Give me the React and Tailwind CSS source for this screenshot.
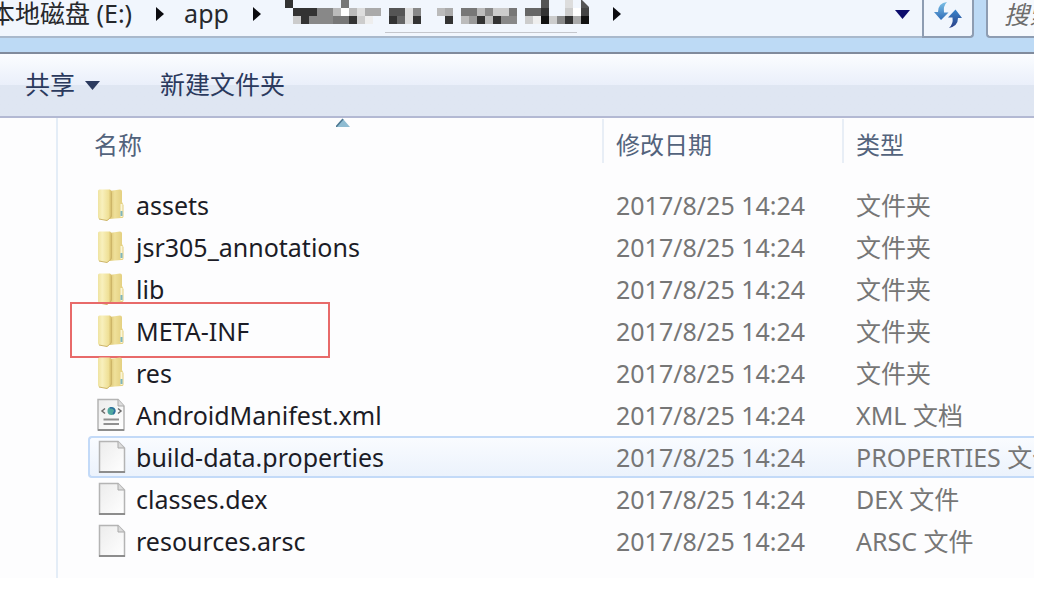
import { useState } from "react";

const files = [
  { name: "assets", kind: "folder", type: "文件夹" },
  { name: "jsr305_annotations", kind: "folder", type: "文件夹" },
  { name: "lib", kind: "folder", type: "文件夹" },
  { name: "META-INF", kind: "folder", type: "文件夹", marked: true },
  { name: "res", kind: "folder", type: "文件夹" },
  { name: "AndroidManifest.xml", kind: "xml", type: "XML 文档" },
  { name: "build-data.properties", kind: "file", type: "PROPERTIES 文件" },
  { name: "classes.dex", kind: "file", type: "DEX 文件" },
  { name: "resources.arsc", kind: "file", type: "ARSC 文件" },
];

// gray level of every 8px block, "." is empty
const mosaic = [
  "3......7........................5..d.5",
  ".33388bfbdaa.55d8..ba.77b8cc7.663..cf4",
  ".c3888773ce..36d3...3.b93b388.ce1c83a1",
];

const FolderIcon = () => (
  <svg className="overflow-visible" width="28" height="34" viewBox="1 0 28 34" aria-hidden="true">
    <defs>
      <linearGradient id="folderFront" x1="0" x2="1">
        <stop offset="0" stopColor="#efe3a0" />
        <stop offset="0.3" stopColor="#f8f0bd" />
        <stop offset="0.75" stopColor="#efe096" />
        <stop offset="1" stopColor="#cdb15c" />
      </linearGradient>
      <linearGradient id="folderBack" x1="0" x2="1">
        <stop offset="0" stopColor="#d8c06c" />
        <stop offset="0.4" stopColor="#efe09a" />
        <stop offset="1" stopColor="#e2cd7c" />
      </linearGradient>
    </defs>
    <path d="M12 3 23 1.5Q25 1.5 25 3.500V14L26.500 17V28.500Q26.500 30 24.500 30L12 31Z" fill="url(#folderBack)" />
    <path d="M1 3Q1 1.500 2.500 1.500H13Q15 2.500 15 5V27Q15 29 13 30.500L10 32.500 2 31Q1 30.500 1 29Z" fill="url(#folderFront)" />
    <path d="M14.500 5V27Q14.500 29 12.500 30.500L10 32.500 2 31" fill="none" stroke="#cdb568" strokeWidth="1" />
    <path d="M24.500 16V29" stroke="#faf5d6" strokeWidth="2" />
    <path d="M24.500 23V28" stroke="#7fb6bd" strokeWidth="2" />
  </svg>
);

const FileIcon = ({ xml }) => (
  <svg className="overflow-visible" width="28" height="34" viewBox="1 0 28 34" aria-hidden="true">
    <defs>
      <linearGradient id="paper" x1="0" y1="0" x2="1" y2="1">
        <stop offset="0" stopColor="#ececec" />
        <stop offset="1" stopColor="#ffffff" />
      </linearGradient>
    </defs>
    <path
      d={xml ? "M1 1.500H21L27 8V32H1Z" : "M2.500 1.500H21L27.500 8V32H2.500Z"}
      fill="url(#paper)"
      stroke="#b4b4b4"
      strokeWidth="1.500"
    />
    <path d={xml ? "M1 32H27" : "M2 32H28"} stroke="#8d8d8d" strokeWidth="2" />
    <path d="M21 1.500V8H27" fill="#dcdcdc" stroke="#a9a9a9" />
    {xml && (
      <>
        <circle cx="14.500" cy="13" r="4" fill="#4fa79f" />
        <path d="M13 10Q15 9 17 11T16 16" fill="none" stroke="#2d6aa0" strokeWidth="1.500" />
        <path d="M8 10.500 5 13 8 15.500M21 10.500 24 13 21 15.500" fill="none" stroke="#6a6a6a" strokeWidth="1.500" />
        <path d="M6.500 21.500H22M6.500 26H22" stroke="#8f8f8f" strokeWidth="2" />
      </>
    )}
  </svg>
);

const CrumbArrow = () => (
  <svg className="shrink-0" width="8" height="14" viewBox="0 0 8 14" aria-hidden="true">
    <path d="M0 0 8 7 0 14Z" fill="#0b0b0f" />
  </svg>
);

const DownArrow = ({ color }) => (
  <svg width="15" height="9" viewBox="0 0 15 9" aria-hidden="true">
    <path d="M0 0H15L7.500 9Z" fill={color} />
  </svg>
);

const RefreshIcon = () => (
  <svg width="28" height="30" viewBox="0 0 28 30" aria-hidden="true">
    <defs>
      <linearGradient id="arrowDown" x1="0" y1="0" x2="0" y2="1">
        <stop offset="0" stopColor="#7cc0e6" />
        <stop offset="1" stopColor="#2f6cb8" />
      </linearGradient>
      <linearGradient id="arrowUp" x1="0" y1="0" x2="0" y2="1">
        <stop offset="0" stopColor="#3a86cc" />
        <stop offset="1" stopColor="#2b3f86" />
      </linearGradient>
    </defs>
    <path d="M13 2Q4 3 4 12H0L7 20 14.500 12.500H10Q9 6 13 2Z" fill="url(#arrowDown)" />
    <path d="M15 28Q24 26 24 18H28L21.500 9.500 14 17.500H18.500Q19.500 24 15 28Z" fill="url(#arrowUp)" />
  </svg>
);

const Mosaic = () => (
  <svg className="shrink-0 self-start" width="304" height="34" viewBox="0 0 304 34" aria-hidden="true">
    {mosaic.map((row, y) =>
      row.split("").map((c, x) =>
        c === "." ? null : (
          <rect key={`${x}-${y}`} x={x * 8} y={y * 8} width="8" height="8" fill={`#${c}${c}${c}`} />
        )
      )
    )}
    <path d="M297 0H304V7Z" fill="#f1f6fd" />
    <path d="M100 32.500H292" stroke="#c4c6cc" strokeWidth="1" />
  </svg>
);

const App = () => {
  const [selected, setSelected] = useState("build-data.properties");

  return (
    <div className="overflow-hidden bg-white pr-2 font-['Noto_Sans','Noto_Sans_CJK_SC',sans-serif] text-[25px]">
      {/* address bar */}
      <div className="flex h-13 items-start overflow-hidden bg-[#bddaf5]">
        <nav className="flex h-[38px] min-w-0 flex-1 items-center border-b-2 border-[#a9b9cc] bg-[#f1f6fd] pb-2 text-[#26282c]">
          <a href="#disk" className="-ml-[10px] shrink-0">本地磁盘 (E:)</a>
          <span className="ml-6"><CrumbArrow /></span>
          <a href="#app" className="ml-5 shrink-0">app</a>
          <span className="ml-6"><CrumbArrow /></span>
          <span className="ml-6 self-start"><Mosaic /></span>
          <span className="ml-6"><CrumbArrow /></span>
          <button className="mr-3 ml-auto" aria-label="历史"><DownArrow color="#0c0c6c" /></button>
        </nav>
        <button
          className="flex h-[38px] w-13 shrink-0 justify-center rounded-br border-x-2 border-b-2 border-[#8e9db2] bg-[#f1f6fd]"
          aria-label="刷新"
        >
          <RefreshIcon />
        </button>
        <input
          className="ml-3 h-[38px] w-12 shrink-0 rounded-bl border-b-2 border-l-2 border-[#8e9db2] bg-[#f6f9fd] pb-2 pl-4 italic outline-none placeholder:text-[#6d6d6d]"
          placeholder="搜索"
          aria-label="搜索"
        />
      </div>

      {/* toolbar */}
      <div className="flex h-16 items-center border-t-2 border-[#818b9c] bg-linear-to-b from-[#fbfdff] from-0% via-[#eaeffa] via-50% to-[#dfe6f2] to-50% pl-[25px] text-[#2b3a5e]">
        <button className="flex items-center gap-[10px]">
          共享 <DownArrow color="#2b3a5e" />
        </button>
        <button className="ml-15">新建文件夹</button>
      </div>

      <div className="flex overflow-hidden border-t-2 border-[#b3b9d3] bg-[#fdfdfe]">
        <div className="w-14 shrink-0" />
        <div className="min-w-0 flex-1 border-l-2 border-[#e4edf7] pb-4 pl-[30px]">
          <table className="w-full table-fixed border-separate border-spacing-0 text-left whitespace-nowrap">
            <thead className="text-2xl text-[#53637c]">
              <tr className="h-[66px]">
                <th className="relative w-[514px] pb-3 pl-[6px] font-normal">
                  名称
                  <svg className="absolute top-0 left-62" width="14" height="9" viewBox="0 0 14 9" aria-hidden="true">
                    <path d="M0 9 7 1 14 9Z" fill="#8fbcd2" />
                    <path d="M0 9 7 1" stroke="#4b7690" strokeWidth="1.500" />
                  </svg>
                </th>
                <th className="w-60 p-0 font-normal">
                  <div className="mb-5 h-11 border-l-2 border-[#e8eef6] pt-2 pl-3 leading-9">修改日期</div>
                </th>
                <th className="p-0 font-normal">
                  <div className="mb-5 h-11 border-l-2 border-[#e8eef6] pt-2 pl-3 leading-9">类型</div>
                </th>
              </tr>
            </thead>
            <tbody>
              {files.map((file) => (
                <tr
                  key={file.name}
                  onClick={() => setSelected(file.name)}
                  className={
                    file.name === selected
                      ? "h-[42px] bg-linear-to-b from-[#fafcff] to-[#ebf2fc] *:border-y-2 *:border-[#c3daf8]"
                      : "h-[42px] *:border-y-2 *:border-transparent"
                  }
                >
                  <td
                    className={
                      file.name === selected
                        ? "relative rounded-l border-l-2 p-0 pl-2"
                        : "relative border-l-2 p-0 pl-2"
                    }
                  >
                    <div className="flex items-center gap-[10px] leading-8 text-[#1c1c26]">
                      {file.kind === "folder" ? <FolderIcon /> : <FileIcon xml={file.kind === "xml"} />}
                      {file.name}
                    </div>
                    {file.marked && (
                      <span className="absolute -top-[10px] -left-5 h-14 w-65 border-2 border-[#e86a6a]" />
                    )}
                  </td>
                  <td className="p-0 pl-[14px] leading-8 text-[#767676]">2017/8/25 14:24</td>
                  <td className="overflow-hidden p-0 pl-[14px] leading-8 text-[#767676]">{file.type}</td>
                </tr>
              ))}
            </tbody>
          </table>
        </div>
      </div>
    </div>
  );
};

export default App;
